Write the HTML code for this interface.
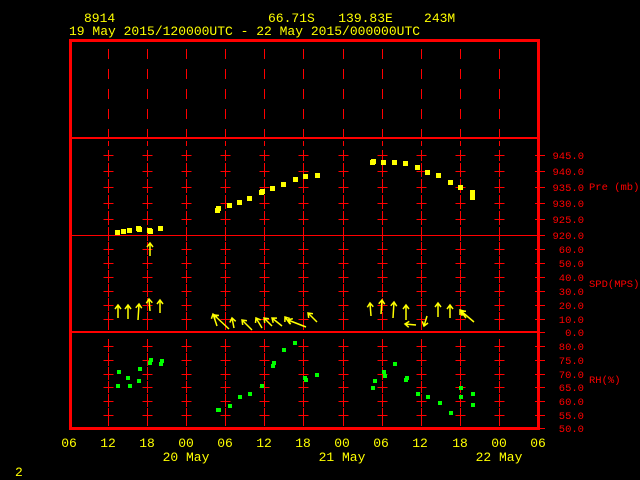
<!DOCTYPE html>
<html><head><meta charset="utf-8"><style>
html,body{margin:0;padding:0;background:#000;width:640px;height:480px;overflow:hidden}
svg{display:block}
text{font-family:"Liberation Mono",monospace}
</style></head><body>
<svg id="s" width="640" height="480" xmlns="http://www.w3.org/2000/svg">
<g fill="#ffff00" font-size="13">
<text x="84" y="22">8914</text>
<text x="268" y="22" xml:space="preserve">66.71S   139.83E    243M</text>
<text x="69" y="35">19 May 2015/120000UTC - 22 May 2015/000000UTC</text>
<text x="15" y="476">2</text>
</g>
<g id="grid" stroke="#ff0000" stroke-width="1" shape-rendering="crispEdges"></g>
<g shape-rendering="crispEdges">
<rect x="70.5" y="40.5" width="468" height="388" fill="none" stroke="#ff0000" stroke-width="3"/>
<line x1="70" y1="138" x2="538" y2="138" stroke="#f00" stroke-width="2"/>
<line x1="70" y1="235.5" x2="538" y2="235.5" stroke="#f00" stroke-width="1"/>
<line x1="70" y1="332" x2="538" y2="332" stroke="#f00" stroke-width="2"/>
</g>
<g fill="#ff0000" font-size="10.5" id="lab"></g>
<g fill="#ff0000" font-size="10.5">
<text x="589" y="190">Pre (mb)</text>
<text x="589" y="287">SPD(MPS)</text>
<text x="589" y="383">RH(%)</text>
</g>
<g fill="#ffff00" font-size="13" text-anchor="middle">
<text x="69" y="447">06</text><text x="108" y="447">12</text><text x="147" y="447">18</text><text x="186" y="447">00</text>
<text x="225" y="447">06</text><text x="264" y="447">12</text><text x="303" y="447">18</text><text x="342" y="447">00</text>
<text x="381" y="447">06</text><text x="420" y="447">12</text><text x="460" y="447">18</text><text x="499" y="447">00</text><text x="538" y="447">06</text>
<text x="186" y="461">20 May</text><text x="342" y="461">21 May</text><text x="499" y="461">22 May</text>
</g>
<g id="pts" shape-rendering="crispEdges"></g>
<g id="arr" stroke="#ffff00" stroke-width="1.5" fill="none"></g>
</svg>
<script>
var NS="http://www.w3.org/2000/svg";
function el(p,t,a){var e=document.createElementNS(NS,t);for(var k in a)e.setAttribute(k,a[k]);p.appendChild(e);return e;}
var g=document.getElementById('grid');
var ticks=[155,171,187,203,219,235,249,263,277,291,305,319,346,360,374,387,401,415];
for(var i=1;i<12;i++){var x=Math.round(69+39.08*i)+0.5;
 for(var y=49;y<138;y+=20)el(g,'line',{x1:x,y1:y,x2:x,y2:y+10});
 ticks.forEach(function(t){el(g,'line',{x1:x-5,y1:t+.5,x2:x+5,y2:t+.5});el(g,'line',{x1:x,y1:t-5,x2:x,y2:t+6});});
 [141,163,179,195,211,227,242,256,270,284,298,312,325,339,353,367,381,394,408,421].forEach(function(y){el(g,'line',{x1:x,y1:y,x2:x,y2:y+5});});
}
var lab=document.getElementById('lab');
var L=[[155,"945.0"],[171,"940.0"],[187,"935.0"],[203,"930.0"],[219,"925.0"],[235,"920.0"],[249,"60.0"],[263,"50.0"],[277,"40.0"],[291,"30.0"],[305,"20.0"],[319,"10.0"],[332,"0.0"],[346,"80.0"],[360,"75.0"],[374,"70.0"],[387,"65.0"],[401,"60.0"],[415,"55.0"],[428,"50.0"]];
L.forEach(function(l){el(g,'line',{x1:535,y1:l[0]+.5,x2:545,y2:l[0]+.5});var t=el(lab,'text',{x:584,y:l[0]+4,'text-anchor':'end'});t.textContent=l[1];});
var P=[[118,233],[124,232],[130,231],[139,229],[140,230],[150,231],[151,232],[161,229],[218,211],[219,209],[230,206],[240,203],[250,199],[262,193],[263,192],[273,189],[284,185],[296,180],[306,177],[318,176],[373,163],[374,162],[384,163],[395,163],[406,164],[418,168],[428,173],[439,176],[451,183],[461,188],[473,193],[473,198]];
var G=[[119,372],[118,386],[128,378],[130,386],[139,381],[140,369],[150,363],[151,360],[161,364],[162,361],[218,410],[219,410],[230,406],[240,397],[250,394],[262,386],[273,366],[274,363],[284,350],[295,343],[305,378],[306,380],[317,375],[373,388],[375,381],[384,372],[385,376],[395,364],[406,380],[407,378],[418,394],[428,397],[440,403],[451,413],[461,397],[461,388],[473,394],[473,405]];
var pg=document.getElementById('pts');
P.forEach(function(p){el(pg,'rect',{x:p[0]-3,y:p[1]-3,width:5,height:5,fill:'#ffff00'});});
G.forEach(function(p){el(pg,'rect',{x:p[0]-2,y:p[1]-2,width:4,height:4,fill:'#00ff00'});});
var A=[[118,318,118,305],[128,319,128,305],[138,320,139,304],[150,311,149,299],[160,313,160,300],[150,256,150,243],
[229,329,214,315],[217,326,213,314],[252,330,242,320],[234,328,232,318],[262,328,256,318],[272,326,264,318],[282,326,272,318],[290,324,285,317],[306,327,288,320],[317,322,308,313],
[371,316,370,303],[381,314,382,300],[393,318,394,302],[406,320,406,305],[416,325,405,324],[427,316,424,326],[438,317,438,303],[450,318,450,305],[474,322,461,311],[466,318,460,310]];
var ag=document.getElementById('arr');
A.forEach(function(a){var dx=a[2]-a[0],dy=a[3]-a[1],l=Math.hypot(dx,dy),ux=dx/l,uy=dy/l,h=5;
 var b1x=a[2]-h*(ux*0.8-uy*0.6),b1y=a[3]-h*(uy*0.8+ux*0.6),b2x=a[2]-h*(ux*0.8+uy*0.6),b2y=a[3]-h*(uy*0.8-ux*0.6);
 el(ag,'path',{d:'M'+a[0]+' '+a[1]+'L'+a[2]+' '+a[3]+'M'+b1x+' '+b1y+'L'+a[2]+' '+a[3]+'L'+b2x+' '+b2y});});
</script>
</body></html>
